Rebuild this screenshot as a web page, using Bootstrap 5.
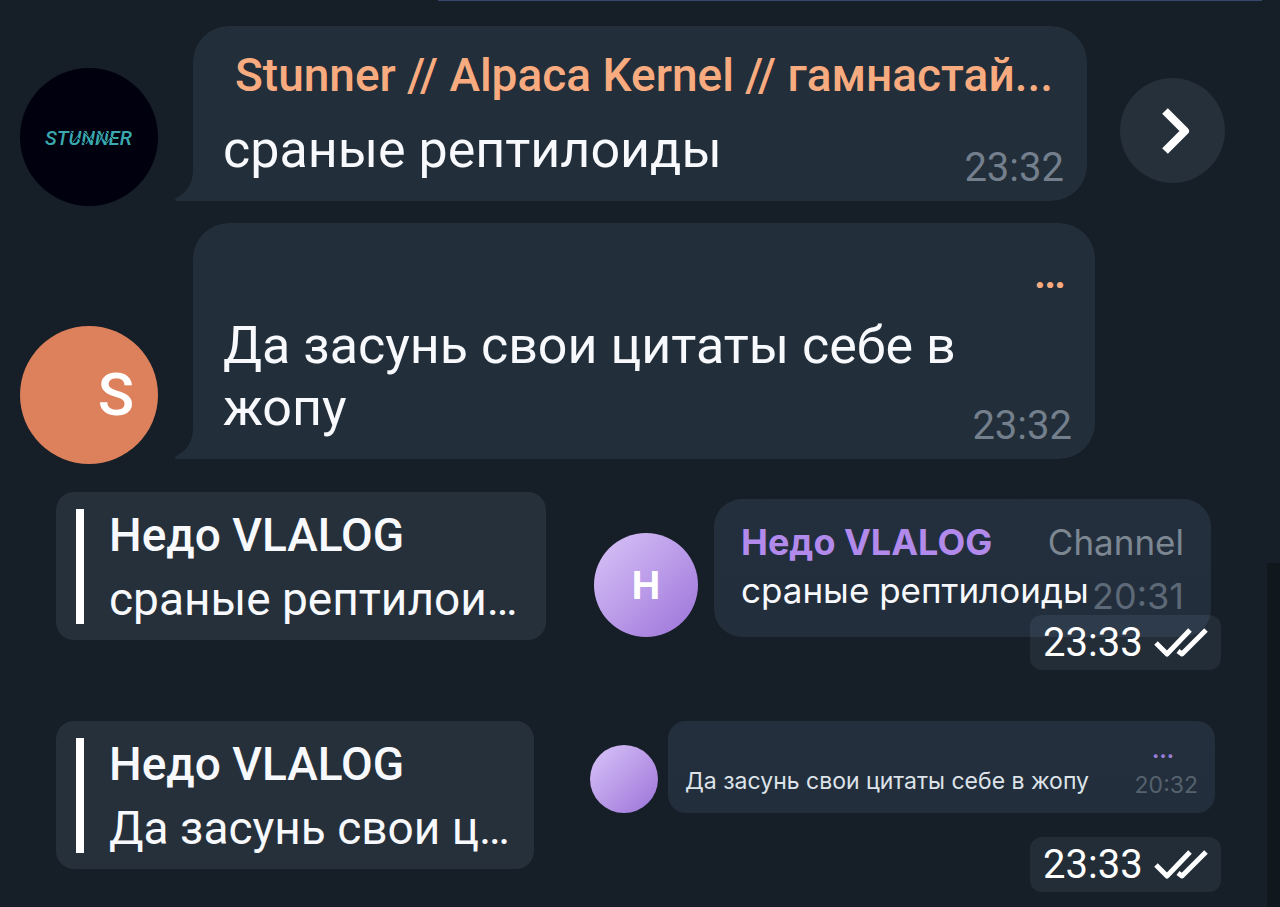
<!DOCTYPE html>
<html lang="ru">
<head>
<meta charset="utf-8">
<meta name="viewport" content="width=device-width, initial-scale=1">
<title>Чат</title>
<link href="https://cdn.jsdelivr.net/npm/bootstrap@5.3.0/dist/css/bootstrap.min.css" rel="stylesheet">
<style>
  body { background: #161e27; color: #f7f9fc; font-family: Roboto, "Noto Sans", sans-serif; }
  .chat { min-height: 100vh; overflow: hidden; }
  .prev-edge { height: 1px; margin: 0 18px 25px 438px; background: #34496b; }
  .chat-row { padding-left: 20px; }
  .ava { width: 138px; height: 138px; flex: none; margin: 0 35px -5px 0; }
  .ava-logo { background: #00000f; }
  .ava-s { background: #dc815c; font-size: 60px; font-weight: 500; padding-right: 24px; color: #fff; }
  .bubble { background: #222e39; border-radius: 36px 36px 36px 0; padding: 18px 23px 8px 30px; }
  .tail { left: -18px; bottom: 0; width: 19px; height: 36px; fill: #222e39; }
  .row-a { padding-right: 55px; margin-bottom: 22px; }
  .row-b { padding-right: 185px; margin-bottom: 33px; }
  .sender { color: #f9ab80; font-size: 46px; line-height: 62px; font-weight: 500; padding-left: 12px; }
  .words { font-size: 52px; line-height: 62px; padding-bottom: 12px; }
  .row-a .words { padding-top: 13px; }
  .row-b .sender { padding: 0 6px 12px 0; }
  .clock { font-size: 40px; line-height: 50px; color: #737f8c; }
  .fwd { width: 105px; height: 105px; background: #25303b; border: 0; margin: 0 0 18px 33px; }
  .own { padding: 0 59px 0 56px; }
  .own-a { margin-bottom: 51px; }
  .quote { background: #25303b; border-radius: 18px; padding: 17px 20px 15px; width: 490px; height: 148px; }
  .own-b .quote { width: 478px; }
  .bar { width: 8px; height: 115px; flex: none; background: #fff; margin-right: 25px; }
  .quote-text { font-size: 46px; line-height: 64px; margin-top: -6px; }
  .sticker { padding-top: 7px; }
  .own-b .sticker { padding-top: 0; }
  .disc { flex: none; width: 104px; height: 104px; margin-right: 16px; background: linear-gradient(135deg, #d3bcf5 10%, #a27bdc 90%); font-family: Inter, sans-serif; font-weight: 700; font-size: 38px; color: #fff; }
  .disc-sm { width: 68px; height: 68px; margin-right: 10px; }
  .note { background: linear-gradient(#242f3e, #232e3c); font-family: Inter, sans-serif; }
  .note-a { border-radius: 28px; width: 497px; height: 138px; padding: 20px 27px; margin-right: 10px; }
  .note-b { border-radius: 18px; width: 547px; height: 92px; padding: 17px; margin-right: 6px; }
  .nick { color: #b18aec; font-size: 36px; line-height: 46px; font-weight: 700; }
  .role { color: #7c8792; font-size: 35px; line-height: 46px; }
  .small-words { font-size: 35px; line-height: 50px; white-space: nowrap; }
  .small-clock { font-size: 36px; line-height: 50px; padding-top: 6px; color: #5d6976; }
  .tiny-words { font-size: 23px; line-height: 32px; color: #dde3e8; white-space: nowrap; }
  .tiny-clock { font-size: 23px; line-height: 32px; padding-top: 4px; color: #55616d; }
  .tiny-dots { color: #9b7bd8; font-size: 22px; line-height: 24px; font-weight: 700; padding-right: 24px; margin-bottom: 3px; }
  .stamp { background: rgba(170, 205, 235, .09); border-radius: 12px; width: 191px; height: 55px; font-size: 40px; line-height: 55px; padding: 0 13px; color: #fff; }
  .own-a .stamp { margin-top: -22px; }
  .own-b .stamp { margin-top: 24px; }
  .thumb { right: 0; top: 563px; bottom: 0; width: 13px; background: #11181d; }
</style>
</head>
<body>
<main class="chat position-relative">
  <div class="prev-edge"></div>

  <div class="chat-row row-a d-flex align-items-end">
    <div class="ava ava-logo rounded-circle d-flex align-items-center justify-content-center">
      <svg width="100" height="32" viewBox="0 0 100 32" role="img" aria-label="Stunner">
        <text x="6" y="24" font-family="Roboto, sans-serif" font-size="20" font-weight="500" font-style="italic" fill="#3aa9ae">STUNNER</text>
        <path d="M32 11l14 12M44 10l13 12M56 10l13 12M67 11l10 10" stroke="#00000f" stroke-width="1"/>
        <path d="M34 21l8-10M47 23l8-12M59 23l6-12M68 22l7-10" stroke="#3aa9ae" stroke-width="1"/>
      </svg>
    </div>
    <div class="bubble position-relative flex-grow-1">
      <svg class="tail position-absolute" viewBox="0 0 19 36" aria-hidden="true"><path d="M18 0H19V36H1Q-1 35 1 33Q18 25 18 4Z"/></svg>
      <div class="sender text-nowrap">Stunner // Alpaca Kernel // гамнастай...</div>
      <div class="d-flex justify-content-between align-items-end">
        <div class="words">сраные рептилоиды</div>
        <time class="clock">23:32</time>
      </div>
    </div>
    <button class="fwd rounded-circle d-flex align-items-center justify-content-center p-0 flex-shrink-0" type="button" aria-label="Переслать">
      <svg width="105" height="105" viewBox="0 0 105 105" fill="none" stroke="#fff" stroke-width="8" stroke-linejoin="round" aria-hidden="true"><path d="M45 33L65 53L45 73"/></svg>
    </button>
  </div>

  <div class="chat-row row-b d-flex align-items-end">
    <div class="ava ava-s rounded-circle d-flex align-items-center justify-content-end">S</div>
    <div class="bubble position-relative flex-grow-1">
      <svg class="tail position-absolute" viewBox="0 0 19 36" aria-hidden="true"><path d="M18 0H19V36H1Q-1 35 1 33Q18 25 18 4Z"/></svg>
      <div class="sender text-end">…</div>
      <div class="d-flex justify-content-between align-items-end">
        <div class="words">Да засунь свои цитаты себе в жопу</div>
        <time class="clock">23:32</time>
      </div>
    </div>
  </div>

  <div class="own own-a d-flex justify-content-between align-items-start">
    <div class="quote d-flex flex-shrink-0">
      <div class="bar"></div>
      <div class="quote-text text-nowrap"><div class="fw-medium">Недо VLALOG</div><div>сраные рептилои…</div></div>
    </div>
    <div class="sticker d-flex flex-column align-items-end">
      <div class="d-flex align-items-end">
        <div class="disc rounded-circle d-flex align-items-center justify-content-center">Н</div>
        <div class="note note-a">
          <div class="d-flex justify-content-between"><span class="nick">Недо VLALOG</span><span class="role">Channel</span></div>
          <div class="d-flex justify-content-between"><span class="small-words">сраные рептилоиды</span><time class="small-clock">20:31</time></div>
        </div>
      </div>
      <div class="stamp position-relative d-flex justify-content-between align-items-center">
        <time>23:33</time>
        <svg width="54" height="32" viewBox="0 0 54 32" fill="none" stroke="#fff" stroke-width="5" stroke-linejoin="round" aria-hidden="true"><path d="M2 16L13 27L36 3M24 24L28 27L52 3"/></svg>
      </div>
    </div>
  </div>

  <div class="own own-b d-flex justify-content-between align-items-start">
    <div class="quote d-flex flex-shrink-0">
      <div class="bar"></div>
      <div class="quote-text text-nowrap"><div class="fw-medium">Недо VLALOG</div><div>Да засунь свои ц…</div></div>
    </div>
    <div class="sticker d-flex flex-column align-items-end">
      <div class="d-flex align-items-end">
        <div class="disc disc-sm rounded-circle"></div>
        <div class="note note-b">
          <div class="tiny-dots text-end">…</div>
          <div class="d-flex justify-content-between"><span class="tiny-words">Да засунь свои цитаты себе в жопу</span><time class="tiny-clock">20:32</time></div>
        </div>
      </div>
      <div class="stamp d-flex justify-content-between align-items-center">
        <time>23:33</time>
        <svg width="54" height="32" viewBox="0 0 54 32" fill="none" stroke="#fff" stroke-width="5" stroke-linejoin="round" aria-hidden="true"><path d="M2 16L13 27L36 3M24 24L28 27L52 3"/></svg>
      </div>
    </div>
  </div>

  <div class="thumb position-absolute"></div>
</main>
<script src="https://cdn.jsdelivr.net/npm/bootstrap@5.3.0/dist/js/bootstrap.bundle.min.js"></script>
</body>
</html>
